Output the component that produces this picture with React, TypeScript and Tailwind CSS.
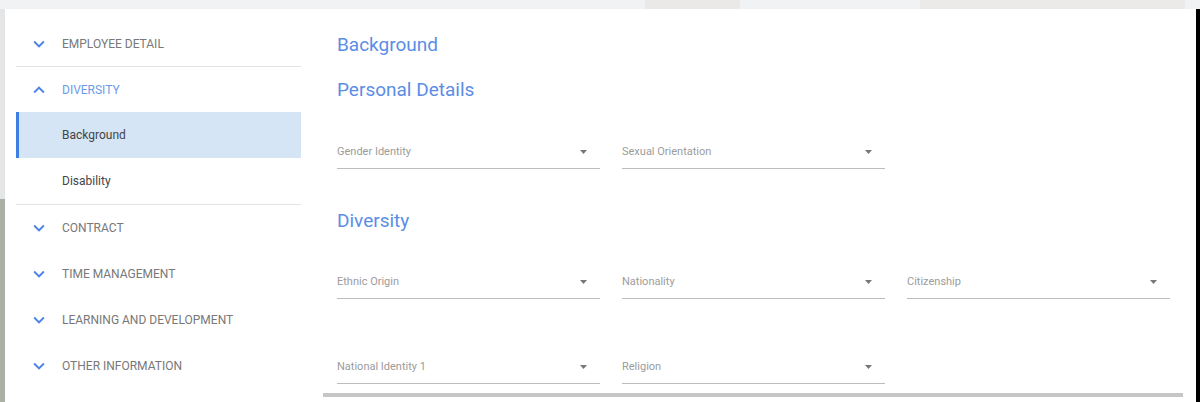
import React from 'react';

const sections = [
  { label: 'CONTRACT' },
  { label: 'TIME MANAGEMENT' },
  { label: 'LEARNING AND DEVELOPMENT' },
  { label: 'OTHER INFORMATION' },
];

function Chevron({ up }: { up?: boolean }) {
  return (
    <svg width="22" height="22" viewBox="0 0 24 24" className="shrink-0 text-[#4b84e6]">
      {up ? (
        <path fill="currentColor" d="M7.41 15.41L12 10.83l4.59 4.58L18 14l-6-6-6 6z" />
      ) : (
        <path fill="currentColor" d="M7.41 8.59L12 13.17l4.59-4.58L18 10l-6 6-6-6 1.41-1.41z" />
      )}
    </svg>
  );
}

function SectionRow({ label, open, short }: { label: string; open?: boolean; short?: boolean }) {
  return (
    <div className={'flex items-center gap-3 pl-3 ' + (short ? 'h-[45px]' : 'h-[46px]')}>
      <Chevron up={open} />
      <span className={'text-[12px] ' + (open ? 'text-[#6c9ae9]' : 'text-[#787878]')}>{label}</span>
    </div>
  );
}

function Select({ label }: { label: string }) {
  return (
    <div className="w-[263px] border-b border-[#bcbcbc] pb-[8px]">
      <div className="flex h-4 items-center justify-between pr-[13px]">
        <span className="text-[11px] text-[#9c9c9c]">{label}</span>
        <svg width="7" height="4" viewBox="0 0 7 4">
          <path d="M0 0h7L3.5 4z" fill="#777" />
        </svg>
      </div>
    </div>
  );
}

export default function App() {
  return (
    <div className="flex h-[402px] w-[1200px] flex-col overflow-hidden bg-[#f1f2f4] font-['Roboto',sans-serif]">
      <div className="flex h-[9px] shrink-0">
        <div className="w-[645px]" />
        <div className="w-[95px] bg-[#ebe9e7]" />
        <div className="w-[180px]" />
        <div className="w-[265px] bg-[#eceae8]" />
      </div>
      <div className="flex flex-1">
        <div className="flex w-[5px] flex-col">
          <div className="h-[190px] bg-[#e4e5e7]" />
          <div className="flex-1 bg-[#a9b0a6]" />
        </div>
        <div className="flex flex-1 bg-white">
          <aside className="w-[296px] pl-[11px] pt-[12px]">
            <div className="w-[285px]">
              <SectionRow label="EMPLOYEE DETAIL" short />
              <div className="h-px bg-[#e3e3e3]" />
              <SectionRow label="DIVERSITY" open short />
              <div className="flex h-[46px] items-center border-l-[3px] border-[#3d7fe3] bg-[#d5e5f5] pl-[43px] text-[12px] text-[#444]">
                Background
              </div>
              <div className="flex h-[46px] items-center pl-[46px] text-[12px] text-[#444]">Disability</div>
              <div className="h-px bg-[#e3e3e3]" />
              {sections.map((s) => (
                <SectionRow key={s.label} label={s.label} />
              ))}
            </div>
          </aside>
          <main className="flex flex-1 flex-col pl-[22px] pr-[13px]">
            <div className="flex-1 pl-[14px] pt-[24px]">
              <h2 className="h-6 text-[19px] leading-6 text-[#5b8de6]">Background</h2>
              <h2 className="mt-[21px] h-6 text-[19px] leading-6 text-[#5b8de6]">Personal Details</h2>
              <div className="mt-[42px] flex gap-[22px]">
                <Select label="Gender Identity" />
                <Select label="Sexual Orientation" />
              </div>
              <h2 className="mt-[40px] h-6 text-[19px] leading-6 text-[#5b8de6]">Diversity</h2>
              <div className="mt-[41px] flex gap-[22px]">
                <Select label="Ethnic Origin" />
                <Select label="Nationality" />
                <Select label="Citizenship" />
              </div>
              <div className="mt-[60px] flex gap-[22px]">
                <Select label="National Identity 1" />
                <Select label="Religion" />
              </div>
            </div>
            <div className="mb-[5px] h-[4px] bg-[#c6c6c6]" />
          </main>
        </div>
        <div className="w-[4px] bg-black" />
      </div>
    </div>
  );
}
